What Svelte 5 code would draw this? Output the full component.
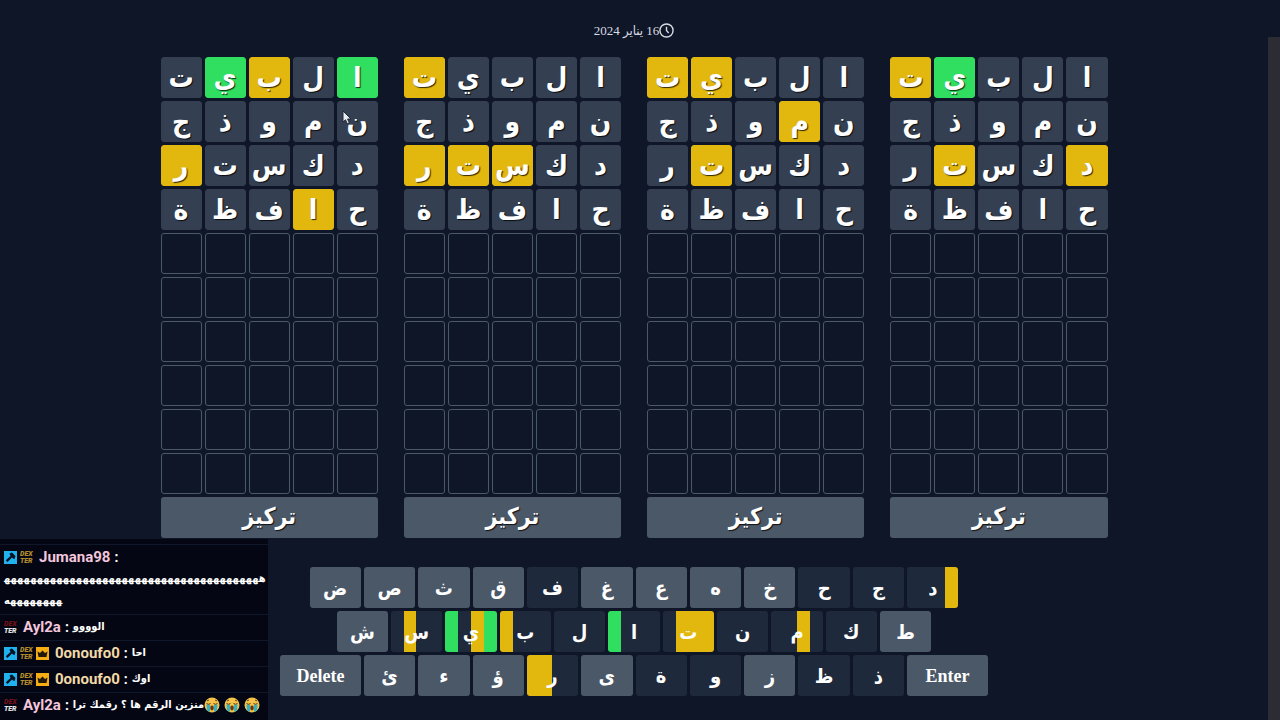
<script>
  const words = ['البيت', 'نموذج', 'دكستر', 'حافظة'];
  const boards = [
    ['g-yg-', '-----', '----y', '-y---'],
    ['----y', '-----', '--yyy', '-----'],
    ['---yy', '-y---', '---y-', '-----'],
    ['---gy', '-----', 'y--y-', '-----']
  ];
  const emptyRows = [4, 5, 6, 7, 8, 9];

  const rows = [
    [...'ضصثقفغعهخحجد'],
    [...'شسيبلاتنمكط'],
    ['Delete', ...'ئءؤرىةوزظذ', 'Enter']
  ];
  // One mark per board, left to right: y = misplaced, g = correct.
  const used = {
    ف: '----', ح: '----', ج: '----', د: '---y', س: '-y--', ي: 'g-yg', ب: 'y---',
    ل: '----', ا: 'g---', ت: '-yyy', ن: '----', م: '--y-', ك: '----', ر: 'yy--',
    ة: '----', و: '----', ظ: '----', ذ: '----'
  };
  const tones = { '-': '#1e293b', y: '#e2b80f', g: '#30df60' };

  function fill(key) {
    const marks = used[key];
    if (!marks) return '#4b5868';
    const stops = [...marks].map((m, i) => `${tones[m]} ${i * 25}% ${i * 25 + 25}%`);
    return `linear-gradient(to right, ${stops.join(', ')})`;
  }

  // The joiner keeps the letters connected across the line break.
  const joiner = '\u200d';
  const chat = [
    {
      badges: ['mod', 'gold'], name: 'Jumana98', tone: 'pink',
      lines: ['ه'.repeat(40) + joiner, joiner + 'ه'.repeat(9)]
    },
    { badges: ['red'], name: 'Ayl2a', tone: 'pink', text: 'الوووو' },
    { badges: ['mod', 'gold', 'crown'], name: '0onoufo0', tone: 'sand', text: 'احا' },
    { badges: ['mod', 'gold', 'crown'], name: '0onoufo0', tone: 'sand', text: 'اوك' },
    { badges: ['red'], name: 'Ayl2a', tone: 'pink', text: 'منزين الرقم ها ؟ رقمك ترا', cries: 3 }
  ];
</script>

<div class="page">
  <main>
    <header>
      <time datetime="2024-01-16" dir="rtl">16 يناير 2024</time>
      <svg class="clock" viewBox="0 0 16 16" aria-hidden="true">
        <circle cx="8" cy="8" r="7" />
        <path d="M8 4v4l2.300 2.600" />
      </svg>
    </header>

    <div class="boards">
      {#each boards as marks}
        <section class="board" dir="rtl">
          {#each marks as row, r}
            {#each [...words[r]] as letter, c}
              <div class="cell filled" class:yellow={row[c] === 'y'} class:green={row[c] === 'g'}>{letter}</div>
            {/each}
          {/each}
          {#each emptyRows as r}
            {#each [0, 1, 2, 3, 4] as c}
              <div class="cell"></div>
            {/each}
          {/each}
          <button class="focus">تركيز</button>
        </section>
      {/each}
    </div>

    <div class="keyboard">
      {#each rows as row}
        <div class="keys">
          {#each row as key}
            <button class="key" class:wide={key.length > 1} style:background={fill(key)}>{key}</button>
          {/each}
        </div>
      {/each}
    </div>
  </main>
  <div class="scroll"></div>

  <aside class="chat">
    {#each chat as m}
      <div class="message">
        {#each m.badges as badge}
          {#if badge === 'mod'}
            <svg class="badge" viewBox="0 0 13 13" aria-hidden="true">
              <rect width="13" height="13" fill="#20b2ee" />
              <path d="M5.500 2.500L8 1.500l3.500 3.500-1 3-1.500-.5-1-1-4.500 4.500-1.700-1.700L6.500 5z" fill="#061322" />
            </svg>
          {:else if badge === 'crown'}
            <svg class="badge" viewBox="0 0 13 13" aria-hidden="true">
              <rect width="13" height="13" fill="#f5ad13" />
              <path d="M1.500 4.500l2.500 1.500L6.500 3.500 9 6l2.500-1.500-1 5.500h-8z" fill="#23190b" />
            </svg>
          {:else}
            <span class="badge tag {badge}"><b>DEX</b><b>TER</b></span>
          {/if}
        {/each}
        <span class="name {m.tone}">{m.name}</span><span class="colon">:</span>
        {#if m.lines}
          {#each m.lines as line}<div class="laugh">{line}</div>{/each}
        {:else}
          <span class="text" dir="rtl">{m.text}</span>
        {/if}
        {#if m.cries}
          <span class="cries">
            {#each { length: m.cries } as _}
              <svg viewBox="0 0 16 16" role="img" aria-label="crying face">
                <circle cx="8" cy="8" r="7.500" fill="#f6c348" />
                <path d="M2.500 7.500h3.500v7.500l-3-1.500zM10 7.500h3.500l-.5 6-3 1.500z" fill="#39b0bd" />
                <path d="M2.500 6.500q2 1.500 4 0M9.500 6.500q2 1.500 4 0M3 4l2-1M13 4l-2-1" fill="none" stroke="#5c431f" />
                <ellipse cx="8" cy="11" rx="1.800" ry="2.400" fill="#613a1c" />
              </svg>
            {/each}
          </span>
        {/if}
      </div>
    {/each}
  </aside>

  <svg class="pointer" viewBox="0 0 10 15" aria-hidden="true">
    <path d="M1 1v11l2.500-2.200 1.800 4 2-1-1.700-3.800H9z" fill="#e8ebf0" stroke="#20293a" />
  </svg>
</div>

<style>
  :global(body) {
    margin: 0;
    background: #0f1628;
  }
  .page {
    position: relative;
    display: flex;
    min-height: 100vh;
    box-sizing: border-box;
    color: #fff;
    overflow: hidden;
  }
  main {
    flex: 1;
    min-width: 0;
  }
  .scroll {
    width: 12px;
    margin-top: 37px;
    background: #2c2c34;
  }
  header {
    display: flex;
    justify-content: center;
    align-items: center;
    height: 57px;
    padding-top: 4px;
    box-sizing: border-box;
    color: #d5dae3;
    font: 13px "Liberation Serif", "DejaVu Sans Condensed", "DejaVu Sans", serif;
  }
  .clock {
    width: 15px;
    height: 15px;
    fill: none;
    stroke: currentColor;
    stroke-width: 1.5;
  }
  .boards {
    display: grid;
    grid-template-columns: repeat(4, 1fr);
    gap: 26px;
    max-width: 947px;
    margin: 0 auto;
  }
  .board {
    display: grid;
    grid-template-columns: repeat(5, 1fr);
    grid-auto-rows: 41px;
    gap: 3px;
  }
  .cell {
    display: flex;
    justify-content: center;
    align-items: center;
    min-width: 0;
    box-sizing: border-box;
    border: 1px solid #4b586a;
    border-radius: 3px;
    font: bold 28px/40px "DejaVu Sans Condensed", "DejaVu Sans", sans-serif;
    text-shadow: 1px 1px 1px #000c;
  }
  .filled {
    background: #344052;
    border-color: #344052;
  }
  .yellow {
    background: #e2b80f;
    border-color: #e2b80f;
  }
  .green {
    background: #30df60;
    border-color: #30df60;
  }
  button {
    border: 0;
    padding: 0;
    border-radius: 3px;
    background: #4b5868;
    color: #fff;
  }
  .focus {
    grid-column: 1 / -1;
    padding-bottom: 3px;
    font: bold 23px/32px "DejaVu Sans Condensed", "DejaVu Sans", sans-serif;
    text-shadow: 1px 1px 1px #000c;
  }
  .keyboard {
    display: grid;
    gap: 3px;
    max-width: 708px;
    margin: 29px auto 0;
  }
  .keys {
    display: flex;
    justify-content: center;
    gap: 3px;
  }
  .key {
    flex: 0 0 7.25%;
    height: 41px;
    font: bold 20px/28px "DejaVu Sans Condensed", "DejaVu Sans", sans-serif;
  }
  .wide {
    flex-basis: 11.4%;
    font: bold 18px/28px "Liberation Serif", serif;
  }
  .chat {
    position: absolute;
    left: 0;
    bottom: 0;
    width: 268px;
    padding: 5px 0 2px;
    background: #02050fd8;
    font: 14px/22px Roboto, "DejaVu Sans", sans-serif;
    overflow: hidden;
  }
  .message {
    display: flex;
    flex-wrap: wrap;
    align-items: center;
    padding: 1px 0 2px 4px;
    border-top: 1px solid #101728;
    white-space: nowrap;
  }
  .badge {
    width: 13px;
    height: 13px;
    margin-right: 3px;
  }
  .tag {
    display: grid;
    font: italic 7px/7px Roboto, sans-serif;
    color: #b78e2d;
  }
  .tag b {
    font-weight: 900;
  }
  .red b:first-child {
    color: #74121a;
  }
  .red b:last-child {
    color: #e8e8ec;
  }
  .name {
    margin-left: 3px;
    font-size: 15px;
    font-weight: 700;
  }
  .pink {
    color: #f3c6dd;
  }
  .sand {
    color: #f3d9a8;
  }
  .colon {
    margin: 0 4px;
    font-weight: 700;
  }
  .text,
  .laugh {
    font: bold 11px/22px "DejaVu Sans Condensed", "DejaVu Sans", sans-serif;
  }
  .laugh {
    width: 100%;
  }
  .cries {
    display: flex;
    gap: 4px;
  }
  .cries svg {
    width: 16px;
    height: 16px;
  }
  .pointer {
    position: absolute;
    left: 342px;
    top: 110px;
    width: 10px;
    height: 15px;
  }
</style>
